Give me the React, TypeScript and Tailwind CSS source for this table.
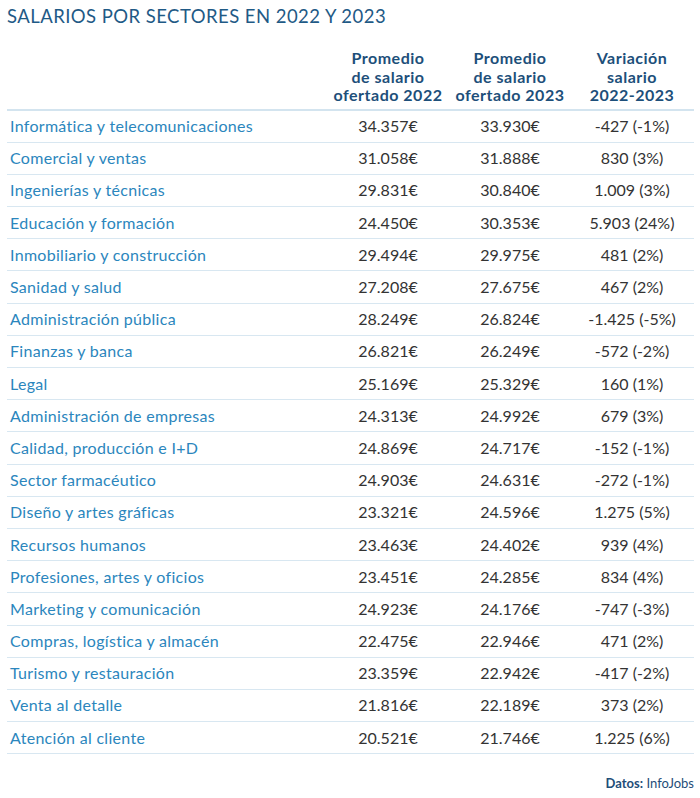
import React from "react";

const rows: [string, string, string, string][] = [
  ["Informática y telecomunicaciones", "34.357€", "33.930€", "-427 (-1%)"],
  ["Comercial y ventas", "31.058€", "31.888€", "830 (3%)"],
  ["Ingenierías y técnicas", "29.831€", "30.840€", "1.009 (3%)"],
  ["Educación y formación", "24.450€", "30.353€", "5.903 (24%)"],
  ["Inmobiliario y construcción", "29.494€", "29.975€", "481 (2%)"],
  ["Sanidad y salud", "27.208€", "27.675€", "467 (2%)"],
  ["Administración pública", "28.249€", "26.824€", "-1.425 (-5%)"],
  ["Finanzas y banca", "26.821€", "26.249€", "-572 (-2%)"],
  ["Legal", "25.169€", "25.329€", "160 (1%)"],
  ["Administración de empresas", "24.313€", "24.992€", "679 (3%)"],
  ["Calidad, producción e I+D", "24.869€", "24.717€", "-152 (-1%)"],
  ["Sector farmacéutico", "24.903€", "24.631€", "-272 (-1%)"],
  ["Diseño y artes gráficas", "23.321€", "24.596€", "1.275 (5%)"],
  ["Recursos humanos", "23.463€", "24.402€", "939 (4%)"],
  ["Profesiones, artes y oficios", "23.451€", "24.285€", "834 (4%)"],
  ["Marketing y comunicación", "24.923€", "24.176€", "-747 (-3%)"],
  ["Compras, logística y almacén", "22.475€", "22.946€", "471 (2%)"],
  ["Turismo y restauración", "23.359€", "22.942€", "-417 (-2%)"],
  ["Venta al detalle", "21.816€", "22.189€", "373 (2%)"],
  ["Atención al cliente", "20.521€", "21.746€", "1.225 (6%)"],
];

export default function App() {
  return (
    <div className="w-[700px] h-[798px] bg-white font-['Lato',sans-serif]">
      <div className="pl-[7px] pr-[6px] pt-[5px]">
        <h1 className="text-[18.5px] leading-[22px] text-[#1f5a86] tracking-[0.45px]">
          SALARIOS POR SECTORES EN 2022 Y 2023
        </h1>
        <div className="mt-[22px] flex border-b-2 border-[#d3e4ef] pb-[4px] text-[16px] leading-[18.5px] font-bold tracking-[0.5px] text-[#1d4f7a]">
          <div className="w-[319px]" />
          <div className="w-[124px] text-center">
            Promedio<br />de salario<br />ofertado 2022
          </div>
          <div className="w-[120px] text-center">
            Promedio<br />de salario<br />ofertado 2023
          </div>
          <div className="flex-1 text-center">
            Variación<br />salario<br />2022-2023
          </div>
        </div>
        {rows.map((r) => (
          <div
            key={r[0]}
            className="flex h-[32.2px] items-center border-b border-[#d8e7f1] text-[16px]"
          >
            <div className="w-[319px] pl-[3px] tracking-[0.3px] text-[#2b86bd]">{r[0]}</div>
            <div className="w-[124px] text-center text-[#333]">{r[1]}</div>
            <div className="w-[120px] text-center text-[#333]">{r[2]}</div>
            <div className="flex-1 text-center text-[#333]">{r[3]}</div>
          </div>
        ))}
        <div className="mt-[20px] text-right text-[13px] text-[#1f4e79]">
          <span className="font-bold">Datos:</span> InfoJobs
        </div>
      </div>
    </div>
  );
}
